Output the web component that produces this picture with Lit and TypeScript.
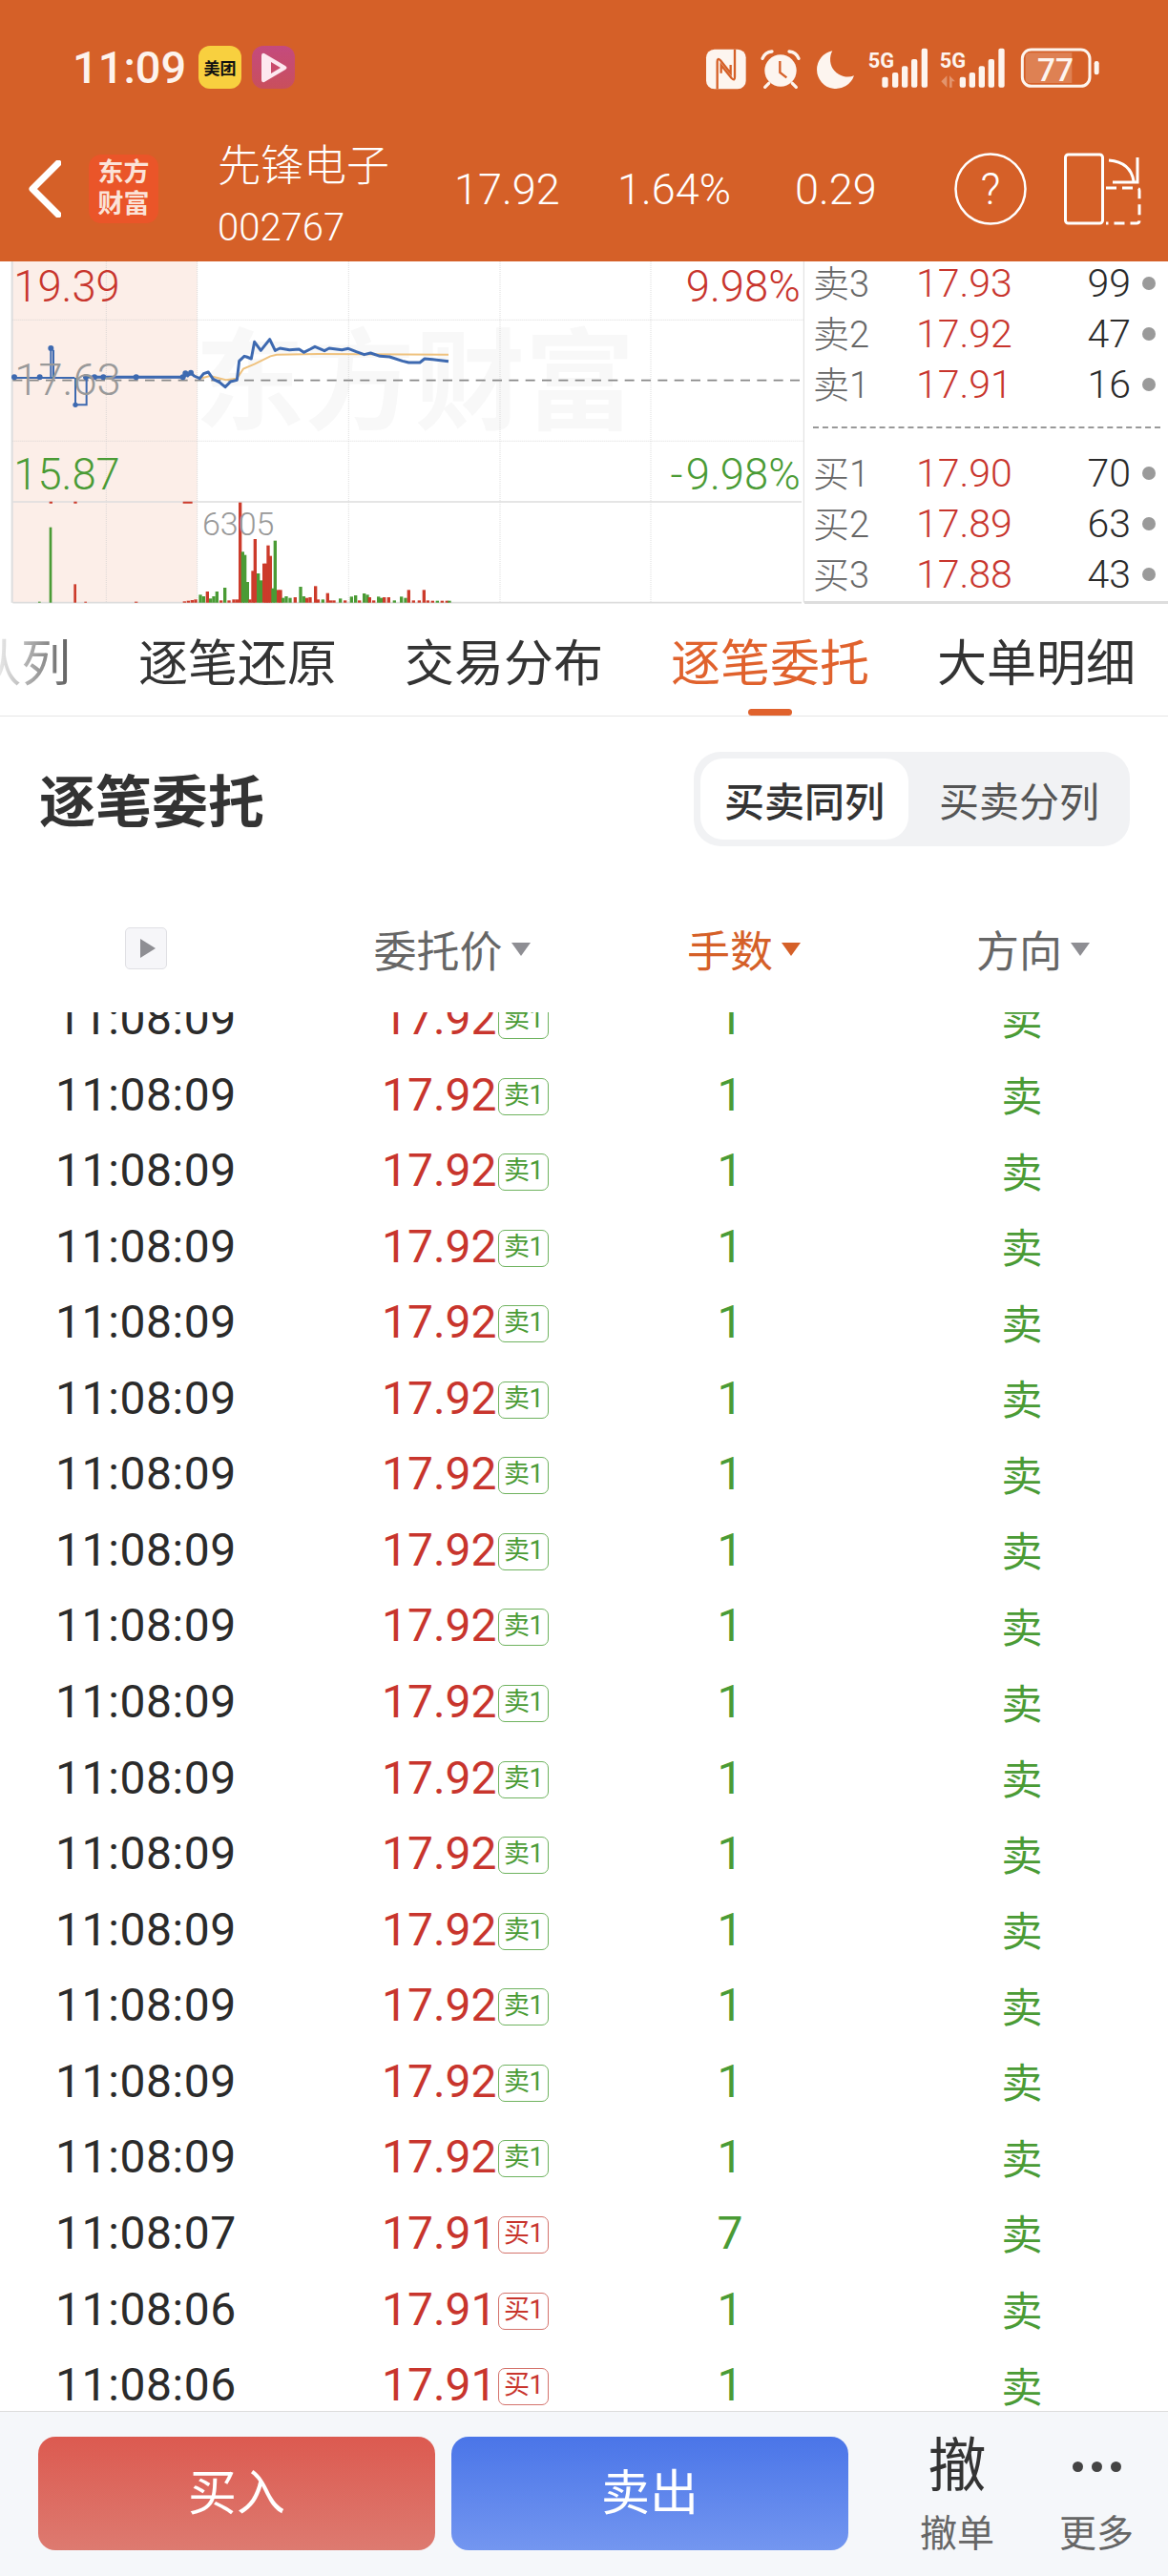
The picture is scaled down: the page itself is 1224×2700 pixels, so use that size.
import { LitElement, html, css, svg } from "lit";
import { customElement } from "lit/decorators.js";

const R = "#c8352d";
const G = "#4a9b35";

type Bar = [number, number, string];
const bars: Bar[] = [
  [160, 848, "g"], [237, 1027, "r"], [125, 1082, "g"], [270, 1082, "r"], [428, 1082, "r"], [580, 1081, "r"], [592, 1079, "r"], [604, 1077, "r"], [615, 1075, "r"],
  [630, 1060, "g"], [640, 1065, "g"], [652, 1050, "r"], [662, 1072, "g"], [672, 1065, "g"], [682, 1050, "g"], [695, 1078, "r"], [707, 1038, "g"], [720, 1078, "r"], [735, 1075, "r"], [745, 1075, "r"],
  [755, 770, "r"], [763, 925, "g"], [770, 935, "g"], [778, 1020, "g"], [786, 1075, "r"], [795, 985, "r"], [802, 885, "r"], [812, 993, "g"], [820, 1015, "g"], [830, 962, "r"], [837, 962, "r"], [843, 905, "r"], [850, 938, "r"], [858, 1040, "g"], [865, 890, "g"], [875, 1045, "r"], [882, 1045, "r"], [890, 1070, "g"], [900, 1065, "g"], [912, 1070, "g"], [928, 1068, "r"], [945, 1035, "g"], [955, 1065, "g"], [965, 1070, "r"], [975, 1068, "r"], [992, 1033, "r"], [1000, 1075, "r"], [1015, 1075, "g"], [1030, 1055, "r"], [1040, 1078, "r"],
  [1050, 1078, "r"], [1070, 1072, "g"], [1085, 1078, "r"], [1105, 1066, "g"], [1118, 1062, "g"], [1130, 1078, "r"], [1145, 1056, "g"], [1155, 1060, "g"], [1162, 1068, "r"], [1175, 1078, "r"], [1190, 1066, "g"], [1198, 1070, "g"], [1208, 1068, "r"], [1222, 1068, "r"], [1240, 1078, "g"], [1262, 1066, "g"], [1275, 1070, "g"], [1285, 1045, "r"], [1300, 1078, "r"], [1318, 1078, "r"], [1333, 1045, "r"], [1345, 1078, "r"], [1360, 1079, "r"], [1375, 1079, "g"], [1390, 1079, "r"], [1405, 1079, "r"], [1413, 1079, "g"],
];

const mainLine = "580,375 583,363 590,372 600,362 610,372 628,380 640,365 655,360 670,382 690,392 708,407 725,390 745,385 752,325 768,310 775,312 790,318 800,265 820,292 848,257 865,292 880,285 910,290 940,288 955,298 975,288 990,280 1020,293 1035,285 1075,290 1095,286 1120,296 1145,305 1165,300 1195,310 1225,312 1265,325 1285,330 1320,330 1335,318 1360,320 1410,326";
const avgLine = "630,380 660,372 710,385 745,380 765,350 800,335 850,310 870,305 1000,303 1410,305";
const preDots = [45, 125, 270, 297, 325, 428, 575];

const book = {
  sell: [["卖3", "17.93", "99"], ["卖2", "17.92", "47"], ["卖1", "17.91", "16"]],
  buy: [["买1", "17.90", "70"], ["买2", "17.89", "63"], ["买3", "17.88", "43"]],
};

type Row = [string, string, string, string];
const rows: Row[] = [
  ...Array.from({ length: 16 }, (): Row => ["11:08:09", "17.92", "卖1", "1"]),
  ["11:08:07", "17.91", "买1", "7"],
  ["11:08:06", "17.91", "买1", "1"],
  ["11:08:06", "17.91", "买1", "1"],
];

@customElement("app-root")
export class AppRoot extends LitElement {
  static styles = css`
    :host {
      display: flex;
      flex-direction: column;
      width: 1224px;
      height: 2700px;
      overflow: hidden;
      background: #fff;
      font-family: Roboto, "Noto Sans CJK SC", sans-serif;
      color: #333;
    }
    svg { display: block; }
    .header { flex: none; height: 274px; background: #d56028; color: #fff; }
    .status { height: 140px; display: flex; align-items: flex-start; padding: 48px 64px 0 76px; box-sizing: border-box; }
    .clock { font-size: 47px; font-weight: 500; line-height: 45px; width: 132px; color: #fdf3ed; }
    .app { width: 45px; height: 45px; border-radius: 12px; margin-right: 11px; display: flex; align-items: center; justify-content: center; }
    .mt { background: #f8d03f; color: #111; font-size: 17px; font-weight: 700; white-space: nowrap; }
    .pk { background: linear-gradient(#c44a7e, #c94f5c); }
    .sys { margin-left: auto; margin-top: -8px; }
    .nav { height: 116px; display: flex; align-items: center; padding-left: 30px; }
    .back { width: 34px; flex: none; }
    .logo { flex: none; margin-left: 29px; width: 73px; height: 72px; border-radius: 13px; background: #ea5529; font-size: 27px; line-height: 33px; font-weight: 700; text-align: center; color: #fbe3d8; }
    .logo div:first-child { margin-top: 3px; }
    .stock { flex: none; width: 248px; margin-left: 62px; margin-top: 20px; display: flex; flex-direction: column; }
    .sname { font-size: 45px; line-height: 56px; font-weight: 300; margin-top: -8px; }
    .code { font-size: 40px; line-height: 44px; font-weight: 300; margin-top: 14px; }
    .val { flex: none; font-size: 45px; font-weight: 300; line-height: 50px; margin-top: 2px; }
    .v1 { width: 171px; } .v2 { width: 186px; } .v3 { width: 167px; }
    .help { flex: none; }
    .split { flex: none; margin-left: 39px; }

    .market { flex: none; height: 361px; display: flex; }
    .chart { flex: none; }
    .book { flex: 1; display: flex; flex-direction: column; border-bottom: 3px solid #ddd; height: 359px; box-sizing: border-box; padding-left: 9px; margin-bottom: 2px; }
    .bk-row { height: 53px; display: grid; grid-template-columns: 108px 111px 114px 1fr; align-items: center; }
    .bk-first { margin-top: -4px; }
    .bk-label { font-size: 38px; color: #666; font-weight: 300; white-space: nowrap; margin-top: -5px; }
    .bk-price { font-size: 41px; color: ${css([R] as any)}; font-weight: 300; }
    .bk-qty { font-size: 41px; color: #2b2b2b; font-weight: 300; text-align: right; }
    .bk-dot { width: 14px; height: 14px; border-radius: 50%; background: #9a9a9a; margin-left: 12px; }
    .bk-div { margin: 18px 8px 20px 0; border-top: 2px dashed #999; }

    .tabs { flex: none; height: 115px; position: relative; border-bottom: 1px solid #e5e5e5; display: flex; align-items: center; overflow: hidden; font-size: 52px; color: #333; white-space: nowrap; box-sizing: content-box; }
    .tabs-inner { display: flex; gap: 71px; margin-left: -30px; margin-top: -3px; }
    .tab-on { color: #e0622d; position: relative; }
    .fade { position: absolute; left: 0; top: 0; bottom: 0; width: 80px; background: linear-gradient(90deg, rgba(255,255,255,0.88), rgba(255,255,255,0.15)); }
    .ind { position: absolute; left: 784px; bottom: 0; width: 46px; height: 7px; border-radius: 4px; background: #e0622d; }

    .title-row { flex: none; display: flex; justify-content: space-between; align-items: center; height: 99px; margin-top: 37px; padding: 0 40px 0 41px; }
    .title { font-size: 59px; font-weight: 700; color: #333; white-space: nowrap; margin-top: -2px; }
    .seg { width: 457px; height: 99px; box-sizing: border-box; padding: 7px 0 7px 7px; border-radius: 28px; background: #f1f2f4; display: flex; align-items: stretch; font-size: 42px; }
    .seg-on { width: 218px; background: #fff; border-radius: 24px; display: flex; align-items: center; justify-content: center; font-weight: 500; color: #333; }
    .seg-off { flex: 1; display: flex; align-items: center; justify-content: center; color: #555; }

    .thead { flex: none; height: 88px; margin-top: 63px; margin-bottom: 23px; display: grid; grid-template-columns: repeat(4, 306px); align-items: center; justify-items: center; font-size: 45px; color: #666; }
    .th { position: relative; white-space: nowrap; }
    .th::after { content: ""; position: absolute; left: 100%; margin-left: 9px; top: 50%; margin-top: -6px; border-style: solid; border-width: 14px 10px 0 10px; border-color: #8e8e93 transparent transparent transparent; }
    .th-on { color: #d56028; }
    .th-on::after { border-top-color: #d56028; }
    .th-dir { margin-right: 6px; }
    .play { width: 44px; height: 44px; box-sizing: border-box; border: 1.5px solid #e0e0e4; border-radius: 5px; background: #f6f6f9; display: flex; align-items: center; justify-content: center; }
    .play i { display: block; margin-left: 3px; border-style: solid; border-width: 10px 0 10px 16px; border-color: transparent transparent transparent #8e8e93; }

    .list { flex: 1; overflow: hidden; min-height: 0; }
    .rows { margin-top: -33.3px; }
    .row { height: 79.57px; display: grid; grid-template-columns: repeat(4, 306px); align-items: center; justify-items: center; font-size: 48px; }
    .time { color: #2b2b2b; letter-spacing: 0.6px; }
    .pr { justify-self: start; display: flex; align-items: center; padding-left: 94px; }
    .pr-v { width: 122px; color: ${css([R] as any)}; }
    .tag { width: 53px; height: 39px; box-sizing: border-box; margin-top: 4px; border: 1.5px solid currentColor; border-radius: 7px; font-size: 27px; line-height: 34px; text-align: center; white-space: nowrap; letter-spacing: -0.5px; }
    .tag.s { color: ${css([G] as any)}; border-color: #6fb35f; }
    .tag.b { color: ${css([R] as any)}; border-color: #d4736c; }
    .qty { color: ${css([G] as any)}; }
    .dir { color: ${css([G] as any)}; font-size: 43px; margin-top: -2px; }

    .footer { flex: none; height: 173px; box-sizing: border-box; border-top: 1px solid #ddd; background: #f5f7fa; display: flex; padding: 26px 0 0 40px; }
    .btn { flex: none; width: 416px; height: 119px; border-radius: 18px; color: #fff; font-size: 51px; line-height: 120px; text-align: center; }
    .buy { background: linear-gradient(#dc5a50, #dd7a70); }
    .sell { background: linear-gradient(#4a75e8, #7396f0); margin-left: 17px; }
    .act { flex: none; width: 146px; margin-top: -26px; display: flex; flex-direction: column; align-items: center; }
    .act-first { margin-left: 41px; }
    .act-ic { height: 110px; padding-top: 4px; box-sizing: border-box; display: flex; align-items: center; justify-content: center; font-size: 61px; color: #333; line-height: 1; }
    .act-t { font-size: 39px; line-height: 36px; color: #666; white-space: nowrap; }
    .dots { display: flex; gap: 9px; }
    .dots i { display: block; width: 11px; height: 11px; border-radius: 50%; background: #444; }
  `;

  private sysIcons() {
    const w = "#fdf5ef";
    return svg`
      <svg class="sys" width="425" height="60" viewBox="0 0 1275 180">
        <rect x="15" y="35" width="125" height="125" rx="26" fill="${w}"/>
        <path d="M50 160V74Q50 60 60 70L92 110V84M105 35V122Q105 136 95 126L62 85V110" fill="none" stroke="#d56028" stroke-width="7"/>
        <circle cx="249" cy="102" r="50" fill="${w}"/>
        <path d="M192 64Q200 44 222 42M306 64Q298 44 276 42" fill="none" stroke="${w}" stroke-width="10" stroke-linecap="round"/>
        <path d="M212 142L200 154M286 142L298 154" stroke="${w}" stroke-width="10" stroke-linecap="round"/>
        <path d="M247 72V108L268 124" fill="none" stroke="#d56028" stroke-width="7"/>
        <path d="M412 40A60 60 0 1 0 480 118A55 55 0 0 1 412 40Z" fill="${w}"/>
        <text x="524" y="93" font-family="Roboto" font-weight="700" font-size="66" fill="${w}" textLength="82" lengthAdjust="spacingAndGlyphs">5G</text>
        ${[[568, 122], [600, 108], [630, 88], [660, 66], [692, 32]].map(([x, y]) => svg`<rect x="${x}" y="${y}" width="19" height="${155 - y}" rx="6" fill="${w}"/>`)}
        <text x="749" y="93" font-family="Roboto" font-weight="700" font-size="66" fill="${w}" textLength="82" lengthAdjust="spacingAndGlyphs">5G</text>
        <path d="M772 118V155L754 136ZM780 118L798 136H788V155H780Z" fill="${w}" opacity=".35"/>
        ${[[812, 122], [842, 108], [872, 88], [902, 66], [934, 32]].map(([x, y]) => svg`<rect x="${x}" y="${y}" width="19" height="${155 - y}" rx="6" fill="${w}"/>`)}
        <rect x="1009" y="36" width="212" height="115" rx="28" fill="none" stroke="${w}" stroke-width="9"/>
        <path d="M1032 46H1165V141H1032Q1019 141 1019 128V59Q1019 46 1032 46Z" fill="${w}" opacity=".22"/>
        <text x="1113" y="135" text-anchor="middle" font-family="Roboto" font-weight="500" font-size="100" fill="${w}">77</text>
        <rect x="1235" y="72" width="15" height="43" rx="7" fill="${w}"/>
      </svg>`;
  }

  private chart() {
    const dottedV = [334, 620, 1096, 1572, 2046];
    return svg`
      <svg class="chart" width="843" height="361" viewBox="0 12 2529 1083" font-family="Roboto">
        <rect x="40" y="12" width="580" height="1073" fill="#fceee8"/>
        <text x="612" y="512" font-family="Noto Sans CJK SC" font-weight="700" font-size="346" fill="#f8f8f8">东方财富</text>
        <path d="M38 12V1085" stroke="#ddd" stroke-width="6"/>
        ${dottedV.map((x) => svg`<path d="M${x} 12V1085" stroke="#ccc" stroke-width="2" stroke-dasharray="3 3"/>`)}
        <path d="M40 196H2526M40 577H2526" stroke="#ccc" stroke-width="2" stroke-dasharray="3 3"/>
        <path d="M40 386H2526" stroke="#888" stroke-width="5" stroke-dasharray="30 22"/>
        <path d="M40 768H2520M40 1085H2520" stroke="#ddd" stroke-width="5"/>
        <path d="M2527 12V1085" stroke="#ddd" stroke-width="3"/>
        <text x="43" y="138" font-size="136" fill="${R}" font-weight="300">19.39</text>
        <text x="2516" y="138" text-anchor="end" font-size="136" fill="${R}" font-weight="300">9.98%</text>
        <text x="43" y="730" font-size="136" fill="${G}" font-weight="300">15.87</text>
        <text x="2516" y="730" text-anchor="end" font-size="136" fill="${G}" font-weight="300">-<tspan dx="10">9.98%</tspan></text>
        <polyline points="${avgLine}" fill="none" stroke="#efc27e" stroke-width="6"/>
        <path d="M40 378H235M160 285V378M168 290V378M237 378V463H272V378M272 376H580" fill="none" stroke="#3d69b0" stroke-width="6"/>
        <path d="M280 376H580" stroke="#3d69b0" stroke-width="9"/>
        <polyline points="${mainLine}" fill="none" stroke="#3d69b0" stroke-width="9" stroke-linejoin="round"/>
        ${preDots.map((x) => svg`<circle cx="${x}" cy="376" r="9" fill="#3d69b0"/>`)}
        <circle cx="160" cy="285" r="9" fill="#3d69b0"/>
        <circle cx="237" cy="463" r="8" fill="#3d69b0"/>
        <circle cx="583" cy="364" r="9" fill="#3d69b0"/>
        <circle cx="600" cy="362" r="9" fill="#3d69b0"/>
        <text x="46" y="433" font-size="136" fill="#999" font-weight="300">17.63</text>
        ${bars.map(([x, y, c]) => svg`<rect x="${x - 5}" y="${y}" width="${x < 300 ? 8 : 10}" height="${1085 - y}" fill="${c === "g" ? G : "#cc3b2b"}"/>`)}
        <path d="M155 770H165M232 770H242M575 770H605" stroke="#cc3b2b" stroke-width="6"/>
        <text x="636" y="873" font-size="102" fill="#999" font-weight="300">6305</text>
      </svg>`;
  }

  private bookRow(r: string[], first = false) {
    return html`<div class="bk-row ${first ? "bk-first" : ""}">
      <span class="bk-label">${r[0]}</span>
      <span class="bk-price">${r[1]}</span>
      <span class="bk-qty">${r[2]}</span>
      <span class="bk-dot"></span>
    </div>`;
  }

  render() {
    return html`
      <div class="header">
        <div class="status">
          <span class="clock">11:09</span>
          <span class="app mt">美团</span>
          <span class="app pk">
            <svg width="30" height="34" viewBox="0 0 30 34">
              <path d="M5 2Q2 1 2 5V29Q2 33 5 32L27 19Q30 17 27 15Z" fill="#fde8ef"/>
              <path d="M12 11V23L22 17Z" fill="#c94c6c"/>
            </svg>
          </span>
          ${this.sysIcons()}
        </div>
        <div class="nav">
          <svg class="back" width="34" height="60" viewBox="0 0 34 60">
            <path d="M31 3L4 30L31 57" fill="none" stroke="#fff" stroke-width="7" stroke-linecap="round" stroke-linejoin="round"/>
          </svg>
          <div class="logo"><div>东方</div><div>财富</div></div>
          <div class="stock">
            <span class="sname">先锋电子</span>
            <span class="code">002767</span>
          </div>
          <span class="val v1">17.92</span>
          <span class="val v2">1.64%</span>
          <span class="val v3">0.29</span>
          <svg class="help" width="76" height="76" viewBox="0 0 76 76">
            <circle cx="38" cy="38" r="36.5" fill="none" stroke="#fff" stroke-width="2.5"/>
            <text x="38" y="54" text-anchor="middle" font-family="Roboto" font-weight="300" font-size="46" fill="#fff">?</text>
          </svg>
          <svg class="split" width="82" height="76" viewBox="0 0 82 76">
            <rect x="1.5" y="2" width="39" height="72" rx="3" fill="none" stroke="#fff" stroke-width="3"/>
            <path d="M47 8Q70 10 73 30M77 5V31H51" fill="none" stroke="#fff" stroke-width="3"/>
            <path d="M44 37H76Q79 37 79 40V71Q79 74 76 74H44" fill="none" stroke="#fff" stroke-width="3" stroke-dasharray="11 6"/>
          </svg>
        </div>
      </div>

      <div class="market">
        ${this.chart()}
        <div class="book">
          ${book.sell.map((r, i) => this.bookRow(r, i === 0))}
          <div class="bk-div"></div>
          ${book.buy.map((r) => this.bookRow(r))}
        </div>
      </div>

      <div class="tabs">
        <div class="tabs-inner">
          <span>队列</span>
          <span>逐笔还原</span>
          <span>交易分布</span>
          <span class="tab-on">逐笔委托</span>
          <span>大单明细</span>
        </div>
        <div class="fade"></div>
        <div class="ind"></div>
      </div>

      <div class="title-row">
        <span class="title">逐笔委托</span>
        <div class="seg">
          <span class="seg-on">买卖同列</span>
          <span class="seg-off">买卖分列</span>
        </div>
      </div>

      <div class="thead">
        <span class="play"><i></i></span>
        <span class="th">委托价</span>
        <span class="th th-on">手数</span>
        <span class="th th-dir">方向</span>
      </div>

      <div class="list">
        <div class="rows">
          ${rows.map(([t, p, tag, q]) => html`
            <div class="row">
              <span class="time">${t}</span>
              <span class="pr"><span class="pr-v">${p}</span><span class="tag ${tag[0] === "卖" ? "s" : "b"}">${tag}</span></span>
              <span class="qty">${q}</span>
              <span class="dir">卖</span>
            </div>`)}
        </div>
      </div>

      <div class="footer">
        <div class="btn buy">买入</div>
        <div class="btn sell">卖出</div>
        <div class="act act-first">
          <div class="act-ic">撤</div>
          <div class="act-t">撤单</div>
        </div>
        <div class="act">
          <div class="act-ic"><span class="dots"><i></i><i></i><i></i></span></div>
          <div class="act-t">更多</div>
        </div>
      </div>
    `;
  }
}
